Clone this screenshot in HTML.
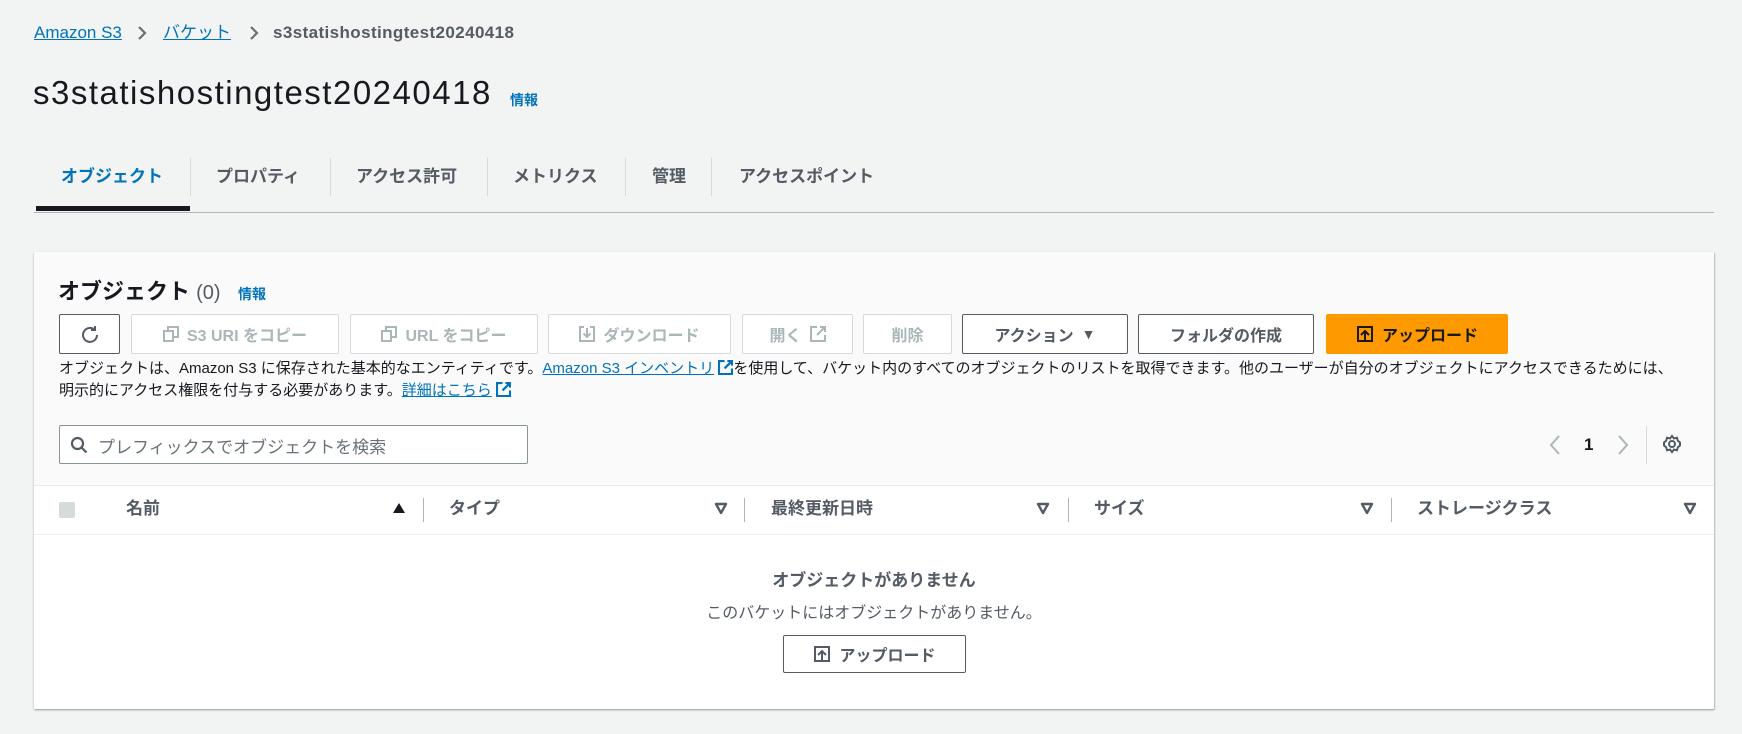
<!DOCTYPE html>
<html><head><meta charset="utf-8"><style>
*{box-sizing:border-box;margin:0;padding:0}
body{width:1742px;height:734px;background:#f2f3f3;font-family:"Liberation Sans","Noto Sans CJK JP",sans-serif;color:#16191f;position:relative;overflow:hidden}
.a{position:absolute;white-space:nowrap}
.lnk{color:#0073bb;text-decoration:underline}
.bc{top:22px;font-size:17px;line-height:22px;height:22px}
.tab{top:162px;font-size:17px;font-weight:bold;color:#545b64}
.sep{position:absolute;width:1px;background:#d5dbdb}
.btn{position:absolute;top:314px;height:40px;border:1px solid #d5dbdb;border-radius:2px;background:#fff;font-size:16px;font-weight:bold;color:#aab7b8;display:flex;align-items:center;justify-content:center;gap:8px}
.btn.on{border-color:#545b64;color:#545b64}
.th{top:498px;font-size:17px;font-weight:bold;color:#545b64;line-height:22px}
.tri{top:501px}
.hs{position:absolute;top:498px;height:24px;width:1px;background:#aab7b8}
</style></head><body>
<div class="a bc lnk" style="left:34px">Amazon S3</div>
<svg class="a" style="left:136px;top:25px" width="12" height="16" viewBox="0 0 12 16" fill="none" stroke="#687078" stroke-width="2.2"><path d="M3 2l6 6-6 6"/></svg>
<div class="a bc lnk" style="left:163px">バケット</div>
<svg class="a" style="left:248px;top:25px" width="12" height="16" viewBox="0 0 12 16" fill="none" stroke="#687078" stroke-width="2.2"><path d="M3 2l6 6-6 6"/></svg>
<div class="a bc" style="left:273px;color:#545b64;font-weight:bold;letter-spacing:0.4px">s3statishostingtest20240418</div>
<div class="a" style="left:33px;top:74px;font-size:33px;letter-spacing:1.5px">s3statishostingtest20240418</div>
<div class="a" style="left:510px;top:90px;font-size:14px;color:#0073bb;font-weight:bold">情報</div>

<div class="a tab" style="left:61px;color:#0073bb">オブジェクト</div>
<div class="a tab" style="left:216px">プロパティ</div>
<div class="a tab" style="left:356px">アクセス許可</div>
<div class="a tab" style="left:513px">メトリクス</div>
<div class="a tab" style="left:652px">管理</div>
<div class="a tab" style="left:739px">アクセスポイント</div>
<div class="sep" style="left:190px;top:158px;height:38px"></div>
<div class="sep" style="left:330px;top:158px;height:38px"></div>
<div class="sep" style="left:487px;top:158px;height:38px"></div>
<div class="sep" style="left:625px;top:158px;height:38px"></div>
<div class="sep" style="left:711px;top:158px;height:38px"></div>
<div class="a" style="left:34px;top:212px;width:1680px;height:1px;background:#aab7b8"></div>
<div class="a" style="left:36px;top:206px;width:154px;height:5px;background:#16191f"></div>

<div class="a" style="left:34px;top:252px;width:1680px;height:457px;background:#fff;box-shadow:0 1px 2px rgba(0,28,36,.3),1px 1px 1px rgba(0,28,36,.15)">
 <div style="height:234px;background:#fafafa;border-bottom:1px solid #eaeded"></div>
</div>
<div class="a" style="left:58px;top:274px;font-size:22px;font-weight:bold">オブジェクト <span style="font-weight:normal;color:#545b64;font-size:20px">(0)</span></div>
<div class="a" style="left:238px;top:284px;font-size:14px;color:#0073bb;font-weight:bold">情報</div>

<div class="btn on" style="left:59px;width:61px"><svg width="20" height="20" viewBox="0 0 20 20" fill="none" stroke="#545b64" stroke-width="2"><path d="M15 6A7 7 0 1 0 17 11"/><path d="M15 2v4h-4"/></svg></div>
<div class="btn" style="left:131px;width:208px"><svg width="16" height="16" viewBox="0 0 16 16" fill="none" stroke="#aab7b8" stroke-width="2"><rect x="1" y="5" width="9" height="10"/><path d="M5 5V1h10v10h-5"/></svg>S3 URI をコピー</div>
<div class="btn" style="left:350px;width:188px"><svg width="16" height="16" viewBox="0 0 16 16" fill="none" stroke="#aab7b8" stroke-width="2"><rect x="1" y="5" width="9" height="10"/><path d="M5 5V1h10v10h-5"/></svg>URL をコピー</div>
<div class="btn" style="left:548px;width:183px"><svg width="16" height="16" viewBox="0 0 16 16" fill="none" stroke="#aab7b8" stroke-width="2"><path d="M5 1H1v14h14V1h-4M8 2v9M4.5 7.5L8 11l3.5-3.5"/></svg>ダウンロード</div>
<div class="btn" style="left:742px;width:111px">開く <svg width="16" height="16" viewBox="0 0 16 16" fill="none" stroke="#aab7b8" stroke-width="2"><path d="M7 1H1v14h14V9M10 1h5v5M15 1L7 9"/></svg></div>
<div class="btn" style="left:863px;width:89px">削除</div>
<div class="btn on" style="left:962px;width:166px">アクション <span style="font-size:14px">▼</span></div>
<div class="btn on" style="left:1138px;width:176px">フォルダの作成</div>
<div class="btn" style="left:1326px;width:182px;background:#ff9900;border-color:#ff9900;color:#16191f"><svg width="18" height="18" viewBox="0 0 18 18" fill="none" stroke="#16191f" stroke-width="2"><rect x="2" y="2" width="14" height="14"/><path d="M9 16V7M5 10l4-4 4 4"/></svg>アップロード</div>

<div class="a" style="left:59px;top:358px;font-size:15px;color:#16191f;line-height:22px">オブジェクトは、Amazon S3 に保存された基本的なエンティティです。<span class="lnk">Amazon S3 インベントリ</span> <svg width="15" height="15" viewBox="0 0 16 16" fill="none" stroke="#0073bb" stroke-width="2.4" style="vertical-align:-2px"><path d="M7 1H1v14h14V9M10 1h5v5M15 1L7 9"/></svg>を使用して、バケット内のすべてのオブジェクトのリストを取得できます。他のユーザーが自分のオブジェクトにアクセスできるためには、<br>明示的にアクセス権限を付与する必要があります。<span class="lnk">詳細はこちら</span> <svg width="15" height="15" viewBox="0 0 16 16" fill="none" stroke="#0073bb" stroke-width="2.4" style="vertical-align:-2px"><path d="M7 1H1v14h14V9M10 1h5v5M15 1L7 9"/></svg></div>

<div class="a" style="left:59px;top:425px;width:469px;height:39px;border:1px solid #879596;border-radius:2px;background:#fff"></div>
<svg class="a" style="left:70px;top:436px" width="18" height="18" viewBox="0 0 18 18" fill="none" stroke="#545b64" stroke-width="2.2"><circle cx="7.5" cy="7.5" r="5.5"/><path d="M11.5 11.5l5 5"/></svg>
<div class="a" style="left:98px;top:433px;font-size:17px;color:#687078">プレフィックスでオブジェクトを検索</div>

<svg class="a" style="left:1548px;top:434px" width="14" height="22" viewBox="0 0 14 22" fill="none" stroke="#aab7b8" stroke-width="2"><path d="M11 2L3 11l8 9"/></svg>
<div class="a" style="left:1584px;top:434px;font-size:17px;font-weight:bold;line-height:22px">1</div>
<svg class="a" style="left:1616px;top:434px" width="14" height="22" viewBox="0 0 14 22" fill="none" stroke="#aab7b8" stroke-width="2"><path d="M3 2l8 9-8 9"/></svg>
<div class="sep" style="left:1646px;top:426px;height:38px"></div>
<svg class="a" style="left:1662px;top:434px" width="20" height="20" viewBox="0 0 20 20" fill="none" stroke="#545b64" stroke-width="2"><circle cx="10" cy="10" r="3"/><path d="M10 2l2 2.5 3-.8.8 3L18 8.5v3l-2.2 1.8-.8 3-3-.8L10 18l-2-2.5-3 .8-.8-3L2 11.5v-3l2.2-1.8.8-3 3 .8z"/></svg>

<div class="a" style="left:59px;top:502px;width:16px;height:16px;background:#d5dbdb;border-radius:2px"></div>
<div class="a th" style="left:126px">名前</div>
<svg class="a tri" style="left:392px" width="14" height="14" viewBox="0 0 14 14"><path d="M1 12h12L7 2z" fill="#16191f"/></svg>
<div class="hs" style="left:423px"></div>
<div class="a th" style="left:449px">タイプ</div>
<svg class="a tri" style="left:714px" width="14" height="14" viewBox="0 0 14 14"><path d="M2 3h10L7 12z" fill="none" stroke="#545b64" stroke-width="2.4" stroke-linejoin="round"/></svg>
<div class="hs" style="left:744px"></div>
<div class="a th" style="left:771px">最終更新日時</div>
<svg class="a tri" style="left:1036px" width="14" height="14" viewBox="0 0 14 14"><path d="M2 3h10L7 12z" fill="none" stroke="#545b64" stroke-width="2.4" stroke-linejoin="round"/></svg>
<div class="hs" style="left:1068px"></div>
<div class="a th" style="left:1094px">サイズ</div>
<svg class="a tri" style="left:1360px" width="14" height="14" viewBox="0 0 14 14"><path d="M2 3h10L7 12z" fill="none" stroke="#545b64" stroke-width="2.4" stroke-linejoin="round"/></svg>
<div class="hs" style="left:1391px"></div>
<div class="a th" style="left:1417px">ストレージクラス</div>
<svg class="a tri" style="left:1683px" width="14" height="14" viewBox="0 0 14 14"><path d="M2 3h10L7 12z" fill="none" stroke="#545b64" stroke-width="2.4" stroke-linejoin="round"/></svg>
<div class="a" style="left:34px;top:534px;width:1680px;height:1px;background:#eaeded"></div>

<div class="a" style="left:0;width:1748px;text-align:center;top:566px;font-size:17px;font-weight:bold;color:#545b64">オブジェクトがありません</div>
<div class="a" style="left:0;width:1748px;text-align:center;top:599px;font-size:16px;color:#545b64">このバケットにはオブジェクトがありません。</div>
<div class="btn on" style="left:783px;top:635px;width:183px;height:38px;color:#545b64"><svg width="18" height="18" viewBox="0 0 18 18" fill="none" stroke="#545b64" stroke-width="2"><rect x="2" y="2" width="14" height="14"/><path d="M9 16V7M5 10l4-4 4 4"/></svg>アップロード</div>
</body></html>
